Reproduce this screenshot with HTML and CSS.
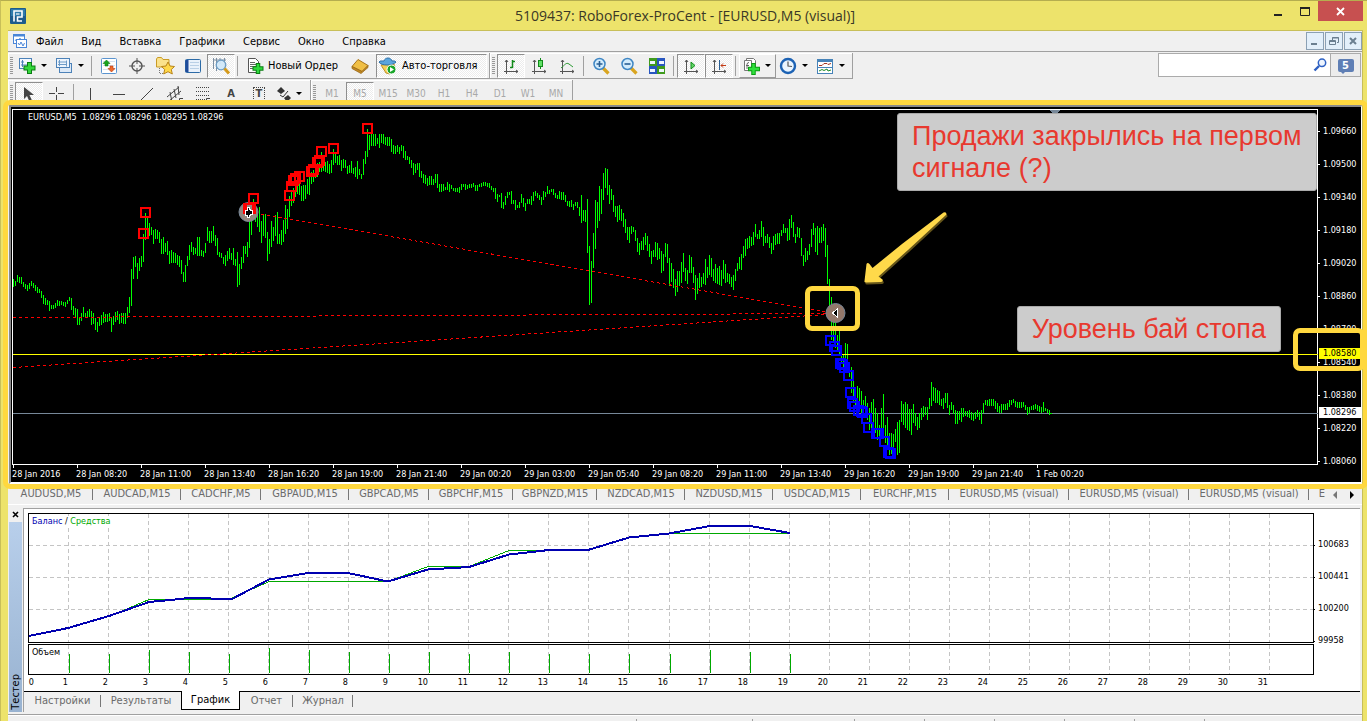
FILE: index.html
```html
<!DOCTYPE html>
<html lang="ru">
<head>
<meta charset="utf-8">
<title>5109437: RoboForex-ProCent - [EURUSD,M5 (visual)]</title>
<link rel="stylesheet" href="styles.css">
</head>
<body>
<div class="window">
  <header class="titlebar">
    <svg class="app-logo" width="16" height="16" viewBox="0 0 16 16"><rect width="16" height="16" rx="1" fill="#1d5c8c"/><rect x="1" y="1" width="14" height="7" fill="#2f7cab"/><path d="M4 13.500V3h8v6H7.500v4H12" fill="none" stroke="#fff" stroke-width="1.600"/><path d="M6 6h3.500" stroke="#fff" stroke-width="1.200"/></svg>
    <h1 class="title">5109437: RoboForex-ProCent - [EURUSD,M5 (visual)]</h1>
    <div class="win-controls">
      <button class="win-btn" aria-label="Свернуть"><svg width="12" height="12"><path d="M2 10h8" stroke="#222" stroke-width="2"/></svg></button>
      <button class="win-btn" aria-label="Развернуть"><svg width="12" height="12"><path d="M1.500 3v7.500h9V3" fill="none" stroke="#222"/><path d="M1 3h10" stroke="#222" stroke-width="2"/></svg></button>
      <button class="win-btn win-close" aria-label="Закрыть"><svg width="9" height="9"><path d="M1 1l7 7M8 1L1 8" stroke="#fff" stroke-width="1.800"/></svg></button>
    </div>
  </header>

  <div class="client">
    <nav class="menubar">
      <svg class="menu-icon" width="16" height="16" viewBox="0 0 16 16"><rect x="1.500" y="1.500" width="11" height="9" fill="#fff" stroke="#4a86d8"/><path d="M1 2.500h12" stroke="#4a86d8" stroke-width="2"/><path d="M3 8l1.500-2L6 8l2-3 1 2" fill="none" stroke="#6aa0e4"/><rect x="4.500" y="6.500" width="10" height="8" fill="#fff" stroke="#4a86d8"/><path d="M6 10l1.500 2L9 9l2 4 1.500-3" fill="none" stroke="#4a86d8"/></svg>
      <button class="menu">Файл</button><button class="menu">Вид</button><button class="menu">Вставка</button><button class="menu">Графики</button><button class="menu">Сервис</button><button class="menu">Окно</button><button class="menu">Справка</button>
      <div class="mdi">
        <button class="mdi-btn" aria-label="Свернуть окно"><svg width="12" height="12"><path d="M2 9h6" stroke="#6b7f90" stroke-width="2"/></svg></button>
        <button class="mdi-btn" aria-label="Восстановить окно"><svg width="12" height="12"><path d="M4.500 5V2.500h6v5H9M4 3h7" fill="none" stroke="#6b7f90"/><path d="M1.500 5.500h6v4h-6zM1 6.500h7" fill="none" stroke="#6b7f90"/></svg></button>
        <button class="mdi-btn" aria-label="Закрыть окно"><svg width="12" height="12"><path d="M3 3l6 6M9 3L3 9" stroke="#6b7f90" stroke-width="2"/></svg></button>
      </div>
    </nav>

    <div class="toolrow">
      <div class="toolbar">
        <span class="grip"></span>
        <button class="tool drop" aria-label="Новый график"><svg width="18" height="18" viewBox="0 0 18 18"><rect x="1.500" y="1.500" width="12" height="10" fill="#f4f8ff" stroke="#4d82b8"/><path d="M4.500 3v7M3 5h3M3 8h9" stroke="#4d82b8" fill="none"/><path d="M11.500 5v12M5.500 11h12" stroke="#0a7d12" stroke-width="5"/><path d="M11.500 6v10M6.500 11h10" stroke="#34d83c" stroke-width="3"/></svg></button>
        <button class="tool drop" aria-label="Профили"><svg width="18" height="18" viewBox="0 0 18 18"><rect x="4.500" y="6.500" width="12" height="9" fill="#dce9f7" stroke="#4d82b8"/><rect x="1.500" y="1.500" width="13" height="9" fill="#eef5fd" stroke="#4d82b8"/><path d="M4.500 3v6M3 5h9M11.500 3.500v6M3 7.500h9" stroke="#6d9bc8" fill="none"/></svg></button>
        <span class="sep"></span>
        <button class="tool" aria-label="Обзор рынка"><svg width="18" height="18" viewBox="0 0 18 18"><rect x="1.500" y="1.500" width="15" height="15" rx="1" fill="#fff" stroke="#5b94cf"/><path d="M3 4.500h12M3 8.500h12M3 12.500h12" stroke="#d6e2ef"/><path d="M6.500 3L3 6.500h2V9h3V6.500h2z" fill="#17a51e" stroke="#0b7c12" stroke-width=".6"/><path d="M11.500 15L8 11.500h2V9h3v2.500h2z" fill="#ee6a2d" stroke="#b8390d" stroke-width=".6"/></svg></button>
        <button class="tool" aria-label="Окно данных"><svg width="18" height="18" viewBox="0 0 18 18"><circle cx="9" cy="9" r="5" fill="none" stroke="#555" stroke-width="1.400"/><path d="M9 1v6M9 11v6M1 9h6M11 9h6" stroke="#555"/></svg></button>
        <button class="tool" aria-label="Навигатор"><svg width="20" height="20" viewBox="0 0 20 20"><path d="M1.500 11V3l1-1.500h4L8 3.500h6V11z" fill="#fbe28c" stroke="#c99b25"/><path d="M4.500 12v6M5 17.500h4" stroke="#777" stroke-dasharray="1 1"/><path d="M13 6l2 4 4.500.5-3.200 3 1 4.500-4.300-2.300L8.700 18l1-4.500-3.200-3L11 10z" fill="#ffd84a" stroke="#b8841a"/></svg></button>
        <button class="tool" aria-label="Терминал"><svg width="18" height="18" viewBox="0 0 18 18"><rect x="1.500" y="2.500" width="15" height="13" rx="1" fill="#e9f1fb" stroke="#2c6aa6"/><path d="M3 3v12" stroke="#1f4b9a" stroke-width="3"/><path d="M6 5.500h9M6 8.500h9M6 11.500h9" stroke="#b9cfe6"/></svg></button>
        <button class="tool on" aria-label="Тестер стратегий"><svg width="18" height="18" viewBox="0 0 18 18"><path d="M1.500 1v11M4.500 1v13M8 1v6M12.500 1v9M1 3h13" stroke="#7d8fa2" fill="none"/><circle cx="9" cy="8" r="4.800" fill="#cfe8fa" fill-opacity=".9" stroke="#6c9cc4" stroke-width="1.300"/><path d="M12.500 11.500l4.500 5" stroke="#d49a1c" stroke-width="3"/></svg></button>
        <span class="sep"></span>
        <button class="tool labelled"><svg width="18" height="18" viewBox="0 0 18 18"><path d="M2.500 1.500h7l3 3v11h-10z" fill="#fff" stroke="#555"/><path d="M4 5.500h5M4 7.500h6M4 9.500h6M4 11.500h4" stroke="#666"/><path d="M12 6v11M6.500 11.500h11" stroke="#0a7d12" stroke-width="4.500"/><path d="M12 7v9M7.500 11.500h9" stroke="#2fd83c" stroke-width="2.500"/></svg><span>Новый Ордер</span></button>
        <button class="tool" aria-label="MetaEditor"><svg width="18" height="18" viewBox="0 0 18 18"><path d="M1 9.500l6-7 10 6-6 6z" fill="#f0bf45" stroke="#a8741a"/><path d="M1 9.500v2l9 5 7-6V8.500l-6 6z" fill="#c58a20" stroke="#99691a" stroke-width=".8"/></svg></button>
        <button class="tool labelled auto on"><svg width="20" height="20" viewBox="0 0 20 20"><path d="M3 9l13-1 1 5-5 5-4-1z" fill="#f5cf55" stroke="#c09024"/><path d="M1 6c2 4 14 4 17 0-1-1.500-3-1-4-1-1-4-7-4-8 0-2 0-4-.5-5 1z" fill="#5aa5dc" stroke="#2c6fa8"/><circle cx="13.500" cy="13.500" r="4.500" fill="#1aa62a" stroke="#fff"/><path d="M12 11v5l4-2.500z" fill="#fff"/></svg><span>Авто-торговля</span></button>
      </div>
      <div class="toolbar">
        <span class="grip"></span>
        <button class="tool on" aria-label="Бары"><svg width="18" height="18" viewBox="0 0 18 18"><path d="M4.500 3v14M2 14.500h14M3 5l1.500-2L6 5M14 13l2 1.500-2 1.500" fill="none" stroke="#555"/><path d="M10.500 3v8M10.500 4.500H13M8 10.500h2.500" stroke="#128a1a" stroke-width="1.500" fill="none"/></svg></button>
        <button class="tool" aria-label="Японские свечи"><svg width="18" height="18" viewBox="0 0 18 18"><path d="M4.500 3v14M2 14.500h14M3 5l1.500-2L6 5M14 13l2 1.500-2 1.500" fill="none" stroke="#555"/><path d="M10.500 1v11" stroke="#128a1a"/><rect x="8.500" y="3.500" width="4" height="6" fill="#5fe065" stroke="#128a1a"/></svg></button>
        <button class="tool" aria-label="Линия"><svg width="18" height="18" viewBox="0 0 18 18"><path d="M4.500 3v14M2 14.500h14M3 5l1.500-2L6 5M14 13l2 1.500-2 1.500" fill="none" stroke="#555"/><path d="M3 11c4-3 5-6 8-4l4 3" stroke="#2b9a33" fill="none"/></svg></button>
        <span class="sep"></span>
        <button class="tool" aria-label="Увеличить"><svg width="18" height="18" viewBox="0 0 18 18"><path d="M11 11l5.500 5.500" stroke="#d9a520" stroke-width="3.200"/><circle cx="7.500" cy="7" r="5.500" fill="#d3ecfc" stroke="#3f86c4" stroke-width="1.500"/><path d="M7.500 4v6M4.500 7h6" stroke="#2a5f94" stroke-width="1.600"/></svg></button>
        <button class="tool" aria-label="Уменьшить"><svg width="18" height="18" viewBox="0 0 18 18"><path d="M11 11l5.500 5.500" stroke="#d9a520" stroke-width="3.200"/><circle cx="7.500" cy="7" r="5.500" fill="#d3ecfc" stroke="#3f86c4" stroke-width="1.500"/><path d="M4.500 7h6" stroke="#2a5f94" stroke-width="1.600"/></svg></button>
        <button class="tool" aria-label="Упорядочить окна"><svg width="18" height="18" viewBox="0 0 18 18"><path d="M1 1h8v8H1zM9 9h8v8H9z" fill="#3f9a1d"/><path d="M9 1h8v8H9zM1 9h8v8H1z" fill="#2856c0"/><path d="M2 4h5v3H2zM11 4h5v3h-5zM2 12h5v3H2zM11 12h5v3h-5z" fill="#eef5ff"/></svg></button>
        <span class="sep"></span>
        <button class="tool on" aria-label="Автопрокрутка"><svg width="18" height="18" viewBox="0 0 18 18"><path d="M4.500 3v14M2 14.500h14M3 5l1.500-2L6 5M14 13l2 1.500-2 1.500" fill="none" stroke="#555"/><path d="M9 5v7l4-3.500z" fill="#5fd765" stroke="#128a1a"/></svg></button>
        <button class="tool on" aria-label="Сдвиг графика"><svg width="18" height="18" viewBox="0 0 18 18"><path d="M4.500 3v14M2 14.500h14M3 5l1.500-2L6 5M14 13l2 1.500-2 1.500" fill="none" stroke="#555"/><path d="M9.500 3v10" stroke="#2a5f94"/><path d="M16 8.500h-5M13 6.500l-2 2 2 2" fill="none" stroke="#c23a14"/></svg></button>
        <span class="sep"></span>
        <button class="tool drop raised" aria-label="Индикаторы"><svg width="18" height="18" viewBox="0 0 18 18"><path d="M4.500 1.500h7l2 2v9h-9z" fill="#fff" stroke="#777"/><path d="M2.500 3.500h7v10h-7z" fill="#fff" stroke="#777"/><path d="M7 5.500q-2 0-2 2V12M4 8.500h3" fill="none" stroke="#666"/><path d="M11.500 6v12M6 12h12" stroke="#0a9d12" stroke-width="4.500"/><path d="M11.500 7v10M7 12h10" stroke="#2fe03c" stroke-width="2.500"/></svg></button>
        <button class="tool drop" aria-label="Периоды"><svg width="18" height="18" viewBox="0 0 18 18"><circle cx="9" cy="9" r="7" fill="#eaf5ff" stroke="#1c62b4" stroke-width="2.400"/><path d="M9 4.500V9l4 .5" fill="none" stroke="#555" stroke-width="1.200"/></svg></button>
        <button class="tool drop" aria-label="Шаблоны"><svg width="18" height="18" viewBox="0 0 18 18"><rect x="1.500" y="2.500" width="15" height="14" fill="#fff" stroke="#4783b8"/><path d="M1 3.500h16" stroke="#4783b8" stroke-width="3"/><path d="M1 10.500h16" stroke="#4783b8"/><path d="M3 8.500h3l2-2h3l1 1 3-1" stroke="#a33620" fill="none"/><path d="M3 14l3-1.500 2 1 3-1.500 1 2 3-1" stroke="#1d8a28" fill="none"/></svg></button>
      </div>
      <form class="search">
        <input class="search-input" type="text" aria-label="Поиск">
        <button class="search-btn" type="button" aria-label="Найти"><svg width="14" height="14" viewBox="0 0 14 14"><circle cx="9" cy="4.800" r="3.700" fill="#eef5ff" stroke="#2f62c4" stroke-width="1.500"/><path d="M6 8l-4.500 4.500" stroke="#2f5fc0" stroke-width="2.400"/></svg></button>
        <button class="chat-btn" type="button"><span class="bubble">5</span></button>
      </form>
    </div>

    <div class="toolrow second">
      <div class="toolbar">
        <span class="grip"></span>
        <button class="tool on" aria-label="Курсор"><svg width="18" height="18" viewBox="0 0 18 18"><path d="M4 2v12l3-3 2.500 5.500 2.500-1L9.500 10H14z" fill="#444"/></svg></button>
        <button class="tool" aria-label="Перекрестие"><svg width="18" height="18" viewBox="0 0 18 18"><path d="M8.500 2v5M8.500 10v6M1 8.500h6M10 8.500h6" stroke="#444"/></svg></button>
        <span class="sep"></span>
        <button class="tool" aria-label="Вертикальная линия"><svg width="18" height="18"><path d="M8.500 3v14" stroke="#444"/></svg></button>
        <button class="tool" aria-label="Горизонтальная линия"><svg width="18" height="18"><path d="M3 9.500h12" stroke="#444"/></svg></button>
        <button class="tool" aria-label="Трендовая линия"><svg width="18" height="18"><path d="M2 16L15 3" stroke="#444"/></svg></button>
        <button class="tool" aria-label="Канал"><svg width="18" height="18"><path d="M1 12L13 2M3 16L15 6M4 7l2 10M8 4l2 9M12 1l1 9" stroke="#444" fill="none"/><path d="M13.500 18v-4.500h3.500M13 16h3" stroke="#444" fill="none"/></svg></button>
        <button class="tool" aria-label="Фибоначчи"><svg width="18" height="18"><path d="M2 2.500h14M2 6.500h14M2 10.500h14M2 14.500h9" stroke="#444" stroke-dasharray="1 1"/><path d="M12.500 18v-4.500H16M12 16h3" stroke="#444" fill="none"/></svg></button>
        <button class="tool letter">A</button>
        <button class="tool letter"><span class="tbox">T</span></button>
        <button class="tool drop" aria-label="Стрелки"><svg width="16" height="18"><path d="M1 6l4-4 4 4-4 3z" fill="#333"/><path d="M4 10l3 2 5-6" stroke="#333" fill="none"/><path d="M8 13l4-3 3 3-4 4z" fill="#333"/></svg></button>
      </div>
      <div class="toolbar frames">
        <span class="grip"></span>
        <button class="tf">M1</button><button class="tf on">M5</button><button class="tf">M15</button><button class="tf">M30</button><button class="tf">H1</button><button class="tf">H4</button><button class="tf">D1</button><button class="tf">W1</button><button class="tf">MN</button>
      </div>
    </div>

    <main class="chart">
      <div class="plot">
        <svg id="price" class="fill" viewBox="11 107 1307 358" preserveAspectRatio="none" shape-rendering="crispEdges">
          <rect x="12.500" y="109.500" width="1305" height="355" fill="none" stroke="#fff"/>
          <path d="M1049 110h11l-5 5z" fill="#778899"/>
          <path d="M13 413.500h1305" stroke="#778899"/>
          <path id="bars" stroke="#0f0"/>
          <path d="M13 354.500h1305" stroke="#ff0"/>
          <g stroke="#f00" stroke-dasharray="3 3"><path d="M249 212L835 313.500"/><path d="M13 317.500L835 313.500"/><path d="M13 367.500L835 314"/></g>
          <g shape-rendering="auto"><circle cx="248.500" cy="212" r="9.500" fill="#94867c" stroke="#778899"/><circle cx="835.500" cy="313" r="9.500" fill="#94786a" stroke="#778899"/></g>
          <g id="sells" fill="none" stroke="#f00" stroke-width="2"></g>
          <g id="buys" fill="none" stroke="#00f" stroke-width="2"></g>
          <path d="M247 208v-1h2v2h1v1h2v4h-2v1h-1v2h-2v-2h-2v-5h2z" fill="#000" stroke="#fff"/>
          <path d="M837.500 308.500v9l-5-4.500z" fill="#000" stroke="#fff"/>
        </svg>
        <span class="quote">EURUSD,M5&nbsp; 1.08296 1.08296 1.08295 1.08296</span>
      </div>
      <ol class="prices">
        <li>1.09660</li><li>1.09500</li><li>1.09340</li><li>1.09180</li><li>1.09020</li><li>1.08860</li><li>1.08700</li><li>1.08540</li><li>1.08380</li><li>1.08220</li><li>1.08060</li>
        <li class="tag stop">1.08580</li><li class="tag bid">1.08296</li>
      </ol>
      <ol class="times">
        <li>28 Jan 2016</li><li>28 Jan 08:20</li><li>28 Jan 11:00</li><li>28 Jan 13:40</li><li>28 Jan 16:20</li><li>28 Jan 19:00</li><li>28 Jan 21:40</li><li>29 Jan 00:20</li><li>29 Jan 03:00</li><li>29 Jan 05:40</li><li>29 Jan 08:20</li><li>29 Jan 11:00</li><li>29 Jan 13:40</li><li>29 Jan 16:20</li><li>29 Jan 19:00</li><li>29 Jan 21:40</li><li>1 Feb 00:20</li>
      </ol>
      <div class="mark frame"></div>
      <div class="mark exit"></div>
      <div class="mark level"></div>
      <svg class="arrow" width="88" height="78" viewBox="862 210 88 78"><path id="shaft" d="M864.500 281l2-17q1-2 3 0l3 4L902 244 943.500 212.500q3-1 3 2L908 250 878.500 276.500l4 3q1 2-1.500 2.500l-15 .5q-2 0-1.500-1.500z" fill="#65551a" transform="translate(1 2)"/><path d="M864.500 281l2-17q1-2 3 0l3 4L902 244 943.500 212.500q3-1 3 2L908 250 878.500 276.500l4 3q1 2-1.500 2.500l-15 .5q-2 0-1.500-1.500z" fill="#ffd94a"/></svg>
      <p class="note first">Продажи закрылись на первом сигнале (?)</p>
      <p class="note second-note">Уровень бай стопа</p>
    </main>

    <nav class="charts">
      <button class="ct w84">AUDUSD,M5</button><button class="ct w88">AUDCAD,M15</button><button class="ct w80">CADCHF,M5</button><button class="ct w88">GBPAUD,M15</button><button class="ct w80">GBPCAD,M5</button><button class="ct w84">GBPCHF,M15</button><button class="ct w84">GBPNZD,M15</button><button class="ct w88">NZDCAD,M15</button><button class="ct w88">NZDUSD,M15</button><button class="ct w88">USDCAD,M15</button><button class="ct w88">EURCHF,M15</button><button class="ct w120">EURUSD,M5 (visual)</button><button class="ct w120">EURUSD,M5 (visual)</button><button class="ct w120">EURUSD,M5 (visual)</button><button class="ct cut">E</button>
      <div class="scroll"><button aria-label="Назад"><svg width="6" height="8"><path d="M5 0v8L1 4z" fill="#777"/></svg></button><button aria-label="Вперёд"><svg width="6" height="8"><path d="M1 0v8l4-4z" fill="#000"/></svg></button></div>
    </nav>

    <section class="tester">
      <aside class="side">
        <button class="side-close" aria-label="Закрыть"><svg width="7" height="7"><path d="M1 1l5 5M6 1L1 6" stroke="#000" stroke-width="1.600"/></svg></button>
        <div class="side-title"><span>Тестер</span></div>
      </aside>
      <div class="panel">
        <div class="report">
          <div class="graph">
            <svg id="balance" class="fill" viewBox="28 513 1286 162" preserveAspectRatio="none" shape-rendering="crispEdges">
              <path id="grid" stroke="#c4c4c4" stroke-dasharray="4 3" fill="none"/>
              <path d="M28.500 513.500h1285v129h-1285zM28.500 644.500h1285v30h-1285z" fill="none" stroke="#000"/>
              <path id="volume" stroke="#00a800"/>
              <path d="M29 636L68 628 109 616.500 149 599.500 229 599.500 269 581.500 388 581.500 428 566.500 469 566.500 509 550.500 588 550.500 629 537 669 533.500 790 533.500" fill="none" stroke="#00a800"/>
              <path d="M29 636L68 628 109 616 149 602 170 600 189 598 232 599 269 579.500 308 573 348 573 388 581.500 428 569.500 469 567 509 554.500 549 550 588 550 629 537.500 669 533.500 710 526 750 526 790 533" fill="none" stroke="#0000b0" stroke-width="2"/>
            </svg>
            <span class="legend"><b class="bal">Баланс</b> / <b class="eq">Средства</b></span>
            <span class="legend vol">Объем</span>
          </div>
          <ol class="yaxis"><li>100683</li><li>100441</li><li>100200</li><li>99958</li></ol>
          <ol class="xaxis" id="xaxis"><li class="zero">0</li></ol>
        </div>
        <nav class="tabs">
          <button class="tab set bar">Настройки</button><button class="tab res">Результаты</button><button class="tab active">График</button><button class="tab rep bar">Отчет</button><button class="tab log bar">Журнал</button>
        </nav>
      </div>
    </section>
    <footer class="status"><i class="s1"></i><i class="s2"></i><i class="s3"></i><i></i><i></i><i></i><i></i><i></i></footer>
  </div>
</div>
<script src="chart.js"></script>
</body>
</html>
```
FILE: chart.js
```js
// Price bars: x, high, low. Bars between two entries are interpolated.
const bars = `13 279 287,15 281 286,17 275 282,19 277 283,21 277 284,23 282 287,27 285 291,31 281 286,37 287 293,39 289 293,41 291 298,43 295 304,47 300 305,49 301 311,51 305 309,53 305 309,57 300 306,61 301 305,65 302 307,69 297 301,71 298 310,73 306 315,75 308 317,77 309 325,79 318 325,83 307 317,85 313 317,89 309 317,91 311 325,93 313 324,95 318 330,97 322 332,99 318 326,103 312 323,105 314 322,109 313 321,111 317 332,113 316 325,115 312 322,117 311 320,119 314 324,121 313 323,125 313 324,127 307 318,129 297 313,131 269 306,133 257 279,135 256 267,137 263 279,139 258 271,141 256 267,143 234 262,145 213 240,147 217 230,149 223 236,151 227 235,153 230 244,155 229 239,157 230 239,159 232 243,161 239 254,163 237 254,165 243 252,167 241 255,169 251 264,171 250 263,175 253 263,179 256 267,181 260 274,183 272 282,185 265 282,187 256 266,189 245 260,191 242 252,193 247 255,195 248 254,197 237 256,199 237 256,201 250 256,203 251 257,205 243 253,207 227 241,209 231 243,211 231 243,213 226 241,215 235 246,217 238 255,219 252 257,221 253 258,223 257 264,225 255 266,227 251 261,229 248 259,231 253 260,233 248 265,235 259 266,237 252 287,239 264 285,241 257 269,243 246 263,245 246 254,247 242 257,249 211 248,251 210 235,253 199 216,255 204 222,257 213 227,259 207 232,261 221 243,263 214 236,265 214 238,267 232 261,269 239 254,271 221 247,273 227 241,275 215 236,277 212 244,279 234 244,281 230 245,283 220 242,285 205 234,287 209 229,289 196 217,291 192 206,293 188 203,295 180 197,297 185 194,299 183 195,301 186 201,303 185 201,305 185 199,307 179 194,309 177 195,311 172 184,313 170 182,315 167 178,317 163 177,319 162 172,321 152 172,323 156 171,325 162 172,327 161 173,329 164 174,331 160 173,333 149 165,335 154 163,337 156 165,339 155 165,341 160 171,343 159 168,345 160 168,347 166 174,349 165 173,351 161 173,353 168 174,355 167 177,357 161 179,359 169 175,361 174 179,363 159 175,365 151 164,367 129 157,369 135 150,371 133 146,375 134 146,377 138 144,379 134 148,381 134 143,383 134 144,385 137 145,389 137 146,391 139 152,393 145 154,395 146 154,397 145 152,399 147 154,401 145 151,403 146 158,405 151 160,407 156 160,409 157 164,411 160 168,413 163 175,415 164 173,417 163 170,419 163 177,421 171 178,423 174 183,425 175 184,427 178 186,429 176 185,431 176 185,433 179 185,435 174 183,437 174 188,439 184 192,443 184 191,445 187 190,447 182 190,449 184 192,451 185 189,453 188 191,457 188 192,459 187 193,461 184 190,463 184 187,465 184 190,467 185 189,469 184 188,473 183 187,475 185 191,477 185 191,479 184 187,483 182 186,485 182 186,489 183 188,493 188 192,495 188 199,497 194 202,499 195 197,501 193 208,503 202 209,505 196 205,507 192 198,509 192 195,511 191 204,513 200 204,515 200 210,517 205 208,519 202 208,521 194 203,523 198 207,525 203 211,527 199 204,529 199 204,531 196 205,533 192 201,535 191 196,539 195 200,541 197 205,543 191 200,545 192 197,547 186 194,549 190 194,551 189 192,553 189 195,555 193 198,557 195 199,559 191 199,561 192 200,563 192 200,565 195 202,567 201 206,571 200 207,573 204 210,575 202 206,577 202 208,579 207 216,581 195 223,583 210 221,585 210 222,587 199 253,589 246 305,591 261 303,593 233 268,595 200 249,597 202 228,599 186 221,601 189 214,603 173 200,605 168 188,607 169 195,609 185 204,611 189 200,613 195 212,615 206 217,617 206 222,619 205 220,621 209 221,623 213 227,625 219 233,627 227 240,629 227 243,631 226 234,633 227 232,635 230 241,637 238 252,639 243 255,641 241 250,643 237 250,645 233 245,647 236 251,649 244 257,651 251 264,653 250 257,655 242 257,657 243 260,659 248 259,661 251 273,663 254 271,665 243 257,667 244 263,669 258 286,671 263 282,673 269 288,675 279 296,677 271 292,679 271 286,681 262 283,683 253 272,685 268 281,687 270 284,689 255 273,691 257 273,693 267 283,695 275 300,697 278 294,699 273 288,701 277 287,703 273 284,705 259 285,707 267 278,709 255 275,711 258 277,713 269 281,715 264 283,717 268 284,719 266 285,721 270 286,723 260 279,725 264 283,727 273 282,729 274 284,731 277 287,733 275 290,735 269 281,737 263 271,739 257 269,741 254 270,743 246 258,745 239 256,747 238 249,749 236 248,751 237 246,753 232 245,755 224 237,757 234 239,759 230 239,761 221 237,763 227 246,765 236 243,767 234 243,769 237 248,771 243 254,773 236 250,775 234 245,777 233 244,779 233 244,781 230 236,783 224 233,785 228 233,787 228 241,789 219 240,791 215 228,793 222 237,795 234 243,797 227 237,799 228 238,801 238 256,803 255 266,805 248 262,807 251 260,809 244 255,811 229 247,813 223 235,815 228 252,817 226 255,819 228 243,821 227 243,823 224 241,825 228 257,827 245 284,829 279 310,831 297 340,833 318 342,835 323 348,837 335 350,839 331 355,841 345 362,843 355 368,845 343 367,847 344 370,849 363 377,851 367 393,853 380 403,855 395 407,857 386 406,859 388 407,861 391 413,863 400 413,865 396 417,867 403 420,869 408 430,871 402 430,873 399 427,875 408 433,877 413 440,879 425 440,881 408 430,883 394 437,885 425 443,887 417 450,889 433 455,891 433 454,893 434 447,895 429 442,897 422 455,899 420 453,901 401 422,903 404 425,905 402 428,907 404 430,909 409 431,911 409 435,913 404 423,915 413 426,917 417 430,919 413 428,921 408 420,923 406 417,925 407 415,927 407 420,929 398 409,931 382 406,933 387 401,935 388 403,937 390 403,939 391 405,941 399 406,943 398 409,945 393 403,947 393 408,949 405 415,951 402 410,953 405 414,955 410 424,957 411 424,959 411 420,961 408 422,963 408 417,965 411 416,969 410 418,973 413 421,977 410 417,979 412 420,981 410 424,983 403 413,985 400 405,989 399 406,993 399 406,997 403 412,999 406 413,1001 404 413,1003 404 410,1007 403 410,1009 400 407,1013 399 403,1015 401 407,1019 402 408,1023 402 407,1025 405 410,1027 407 415,1031 406 410,1035 404 409,1039 406 412,1041 407 413,1043 402 412,1045 408 411,1049 410 415`
  .split(',').map(s => s.split(' ').map(Number));

let d = '';
for (let i = 0; i < bars.length; i++) {
  const [x, hi, lo] = bars[i];
  const next = bars[i + 1] || [x + 2, hi, lo];
  for (let px = x; px < next[0]; px += 2) {
    const t = (px - x) / (next[0] - x);
    const a = Math.round(hi + (next[1] - hi) * t);
    const b = Math.round(lo + (next[2] - lo) * t);
    d += `M${px + 0.5} ${a}V${b}`;
  }
}
document.getElementById('bars').setAttribute('d', d + 'M1050 413.500h2');

// Order markers, by centre.
const squares = (id, pts) => {
  document.getElementById(id).innerHTML =
    pts.map(([x, y]) => `<rect x="${x - 4}" y="${y - 4}" width="9" height="9"/>`).join('');
};
squares('sells', [[145, 212], [143, 233], [253, 198], [248, 208], [250, 208], [289, 195], [291, 186],
  [293, 180], [295, 178], [299, 176], [311, 171], [313, 169], [317, 162], [319, 160], [321, 151], [333, 148], [367, 128]]);
squares('buys', [[830, 340], [834, 346], [836, 350], [840, 363], [842, 364], [844, 367], [848, 375], [850, 392],
  [852, 403], [854, 406], [858, 410], [861, 411], [862, 412], [866, 418], [868, 427], [876, 433], [878, 433],
  [884, 441], [888, 452], [890, 453]]);

// Tester grid, volumes and day numbers.
const volumeTop = [654, 654, 650, 652, 654, 648, 650, 652, 654, 652, 654, 652, 654, 654, 654, 654, 650, 652, 654];
let grid = 'M29 545.500H1313M29 577.500H1313M29 609.500H1313';
let volume = '';
const axis = document.getElementById('xaxis');
for (let n = 1; n <= 31; n++) {
  const x = 28.5 + 40 * n + (n > 15 ? 1 : 0);
  grid += `M${x} 514V642M${x} 645V674`;
  if (n <= 19) volume += `M${x + 1} ${volumeTop[n - 1]}V673`;
  const li = document.createElement('li');
  li.textContent = n;
  axis.append(li);
}
document.getElementById('grid').setAttribute('d', grid);
document.getElementById('volume').setAttribute('d', volume);
```
FILE: styles.css
```css
* { box-sizing: border-box; }
body {
  margin: 0;
  background: #ede36b;
  font: 11px/14px "DejaVu Sans Condensed", "DejaVu Sans", sans-serif;
  color: #000;
}
button, input { font: inherit; color: inherit; margin: 0; padding: 0; border: 0; background: none; }
ol { list-style: none; margin: 0; padding: 0; }
svg { display: block; flex: none; }
.fill { width: 100%; height: 100%; }

.window {
  display: flex;
  flex-direction: column;
  height: 100vh;
  min-height: 700px;
  overflow: hidden;
  padding: 0 4px 0 7px;
  border-top: 1px solid #b5ad4f;
  border-left: 1px solid #c8bf59;
}
.titlebar { display: flex; height: 29px; align-items: center; padding-left: 2px; }
.title {
  flex: 1;
  margin: 0;
  text-align: center;
  font: 14px/20px "Open Sans", "Noto Sans", sans-serif;
  color: #3a3826;
  padding-left: 80px;
}
.win-controls { display: flex; align-self: flex-start; }
.win-btn { display: flex; width: 27px; height: 20px; align-items: center; justify-content: center; }
.win-close { width: 45px; background: #c75050; }

.client {
  display: flex;
  flex: 1;
  flex-direction: column;
  min-height: 0;
  border: solid #c8bf59;
  border-width: 1px 1px 0 0;
  background: #f0f0f0;
}
.menubar {
  display: flex;
  flex: none;
  height: 21px;
  align-items: center;
  border-bottom: 1px solid #a0a0a0;
  padding-left: 4px;
}
.menu-icon { margin-right: -1px; }
.menu { padding: 1px 9px 0; }
.mdi { display: flex; gap: 1px; margin-left: auto; }
.mdi-btn {
  display: flex;
  width: 18px;
  height: 18px;
  align-items: center;
  justify-content: center;
  border: 1px solid #8ba0b4;
  background: #e3effa;
}

.toolrow { display: flex; flex: none; height: 28px; padding-top: 1px; }
.toolbar {
  display: flex;
  height: 26px;
  align-items: center;
  border: solid #a0a0a0;
  border-width: 0 1px 1px 0;
  box-shadow: inset 0 1px #fff, inset 1px 0 #fff;
  padding-right: 2px;
}
.grip {
  width: 3px;
  height: 18px;
  margin: 0 2px;
  background: repeating-linear-gradient(#999 0 1px, #f0f0f0 1px 2px);
}
.tool {
  display: flex;
  width: 28px;
  height: 24px;
  align-items: center;
  justify-content: center;
  border: 1px solid transparent;
}
.on {
  border-color: #8f8f8f #fff #fff #8f8f8f;
  background: repeating-conic-gradient(#fff 0 25%, #ececec 0 50%) 0 0 / 2px 2px;
}
.raised { border-color: #fff #999 #999 #fff; }
.drop { width: 37px; justify-content: space-between; padding: 0 4px 0 2px; }
.drop::after { content: ""; border: 3px solid transparent; border-top-color: #000; border-bottom: 0; }
.sep { width: 1px; height: 20px; margin: 0 3px 0 2px; background: #a0a0a0; }
.labelled { width: 105px; justify-content: flex-start; gap: 4px; padding-left: 4px; }
.auto { width: 111px; margin-left: 2px; padding-left: 1px; }

.search { display: flex; height: 24px; margin: 0 1px 0 auto; border: 1px solid #ababab; background: #fff; }
.search-input { width: 150px; outline: 0; }
.search-btn { display: flex; width: 21px; align-items: center; justify-content: center; }
.chat-btn {
  display: flex;
  width: 30px;
  align-items: center;
  justify-content: center;
  border-left: 1px solid #ababab;
  background: #ececec;
}
.bubble {
  width: 16px;
  height: 13px;
  border-radius: 2px;
  background: #5f7fb5;
  color: #fff;
  font-weight: bold;
  line-height: 13px;
}
.bubble::after { content: ""; display: block; margin-left: 3px; width: 0; border: 2px solid transparent; border-top-color: #5f7fb5; }

.second { height: 25px; padding-top: 0; overflow: hidden; }
.second .toolbar { height: 28px; }
.letter { font-weight: bold; color: #444; }
.tbox { border: 1px dotted #444; width: 12px; line-height: 12px; }
.second .drop { width: 35px; padding: 0 5px 0 2px; }
.tf { width: 28px; height: 24px; color: #a8a8a8; font-size: 10px; border: 1px solid transparent; }
.tf.on { border-color: #8f8f8f #fff #fff #8f8f8f; }

.chart {
  position: relative;
  display: grid;
  flex: none;
  grid-template: 358px 17px / 1fr 43px;
  margin-left: 1px;
  border: solid;
  border-width: 2px 1px 2px 2px;
  border-color: #8a8a8a #fff #fff #8a8a8a;
  background: #000;
  color: #fff;
  font-size: 9px;
  line-height: 11px;
}
.plot { position: relative; min-width: 0; }
.quote { position: absolute; left: 17px; top: 5px; white-space: nowrap; }
.prices { position: relative; grid-row: 1 / 3; grid-column: 2; padding-top: 8px; }
.prices li { height: 33px; padding-left: 5px; line-height: 33px; }
.prices li:not(.tag) { background: linear-gradient(#fff, #fff) 0 16px / 2px 1px no-repeat; }
.prices .tag { position: absolute; left: 1px; right: 0; height: 11px; padding-left: 4px; line-height: 11px; color: #000; }
.stop { top: 241px; background: #ff0; }
.bid { top: 300px; background: #fff; }
.times { display: flex; min-width: 0; padding-left: 1px; }
.times li { flex: none; width: 64px; padding-top: 4px; background: linear-gradient(#fff, #fff) 1px 0 / 1px 3px no-repeat; }
.mark { position: absolute; border: 5px solid #ffd83f; border-radius: 7px; }
.frame { inset: -7px -7px -7px -8px; z-index: 2; }
.exit { left: 794px; top: 179px; width: 55px; height: 45px; }
.level { right: -4px; top: 221px; width: 72px; height: 43px; }
.arrow { position: absolute; left: 851px; top: 103px; }
.note {
  position: absolute;
  margin: 0;
  border: 1px solid #aaa;
  border-radius: 3px;
  background: #ccc;
  color: #e8392f;
  font: 27px/32px "Liberation Sans", sans-serif;
}
.first { right: 44px; top: 6px; width: 420px; padding: 6px 14px; }
.second-note { right: 80px; top: 199px; padding: 6px 14px; white-space: nowrap; }

.charts { display: flex; flex: none; height: 21px; padding-left: 1px; border-bottom: 1px solid #fff; color: #6a6a6a; overflow: hidden; }
.ct { flex: none; height: 20px; background: linear-gradient(#777, #777) right 4px / 1px 12px no-repeat; }
.w80 { width: 80px; }
.w84 { width: 84px; }
.w88 { width: 88px; }
.w120 { width: 120px; }
.cut { width: 22px; background: none; padding-left: 4px; }
.scroll { display: flex; gap: 11px; align-items: center; margin: 2px 7px 0 auto; }

.tester { display: grid; flex: none; grid-template-columns: 14px 1fr; margin: 3px 2px 0 1px; }
.side { display: flex; flex-direction: column; }
.side-close { display: flex; height: 12px; margin-right: 2px; align-items: center; justify-content: center; }
.side-title {
  display: flex;
  flex: 1;
  width: 13px;
  margin-top: 2px;
  align-items: flex-end;
  background: linear-gradient(#b8cfeb, #98b2d0);
}
.side-title span { writing-mode: vertical-rl; transform: rotate(180deg); line-height: 13px; padding-top: 2px; }
.panel { min-width: 0; border-top: 1px solid #a0a0a0; border-left: 1px solid #a0a0a0; }
.report {
  display: grid;
  grid-template: 162px 16px / 1fr 46px;
  padding: 4px 0 0 4px;
  background: #fff;
  border-bottom: 1px solid #000;
  font-size: 9px;
  line-height: 11px;
}
.graph { position: relative; min-width: 0; }
.legend { position: absolute; left: 4px; top: 3px; background: #fff; }
.legend b { font-weight: normal; }
.vol { top: 134px; }
.bal { color: #0000b0; }
.eq { color: #00a800; }
.yaxis { padding-top: 15px; }
.yaxis li { height: 32px; padding-left: 4px; line-height: 32px; background: linear-gradient(#000, #000) 0 17px / 1px 1px no-repeat; }
.xaxis { display: flex; grid-column: 1 / 3; line-height: 15px; }
.xaxis li { flex: none; width: 40px; text-align: right; }
.xaxis .zero { width: 6px; }
.xaxis .zero + li { width: 34px; }
.tabs { display: flex; height: 20px; color: #6a6a6a; }
.tab { flex: none; height: 18px; }
.bar { background: linear-gradient(#777, #777) right 3px / 1px 12px no-repeat; }
.set { width: 77px; }
.res { width: 80px; }
.rep { width: 53px; }
.log { width: 60px; }
.active { width: 59px; margin-top: -1px; height: 19px; background: #fff; border: solid #000; border-width: 0 1px 1px; color: #000; }

.status { display: flex; flex: 1; margin-top: 2px; padding-top: 4px; border-top: 1px solid #a0a0a0; box-shadow: inset 0 1px #fff; }
.status i { flex: none; width: 70px; border-right: 1px solid #a0a0a0; }
.status .s1 { width: 629px; }
.status .s2 { width: 116px; }
.status .s3 { width: 102px; }
```
